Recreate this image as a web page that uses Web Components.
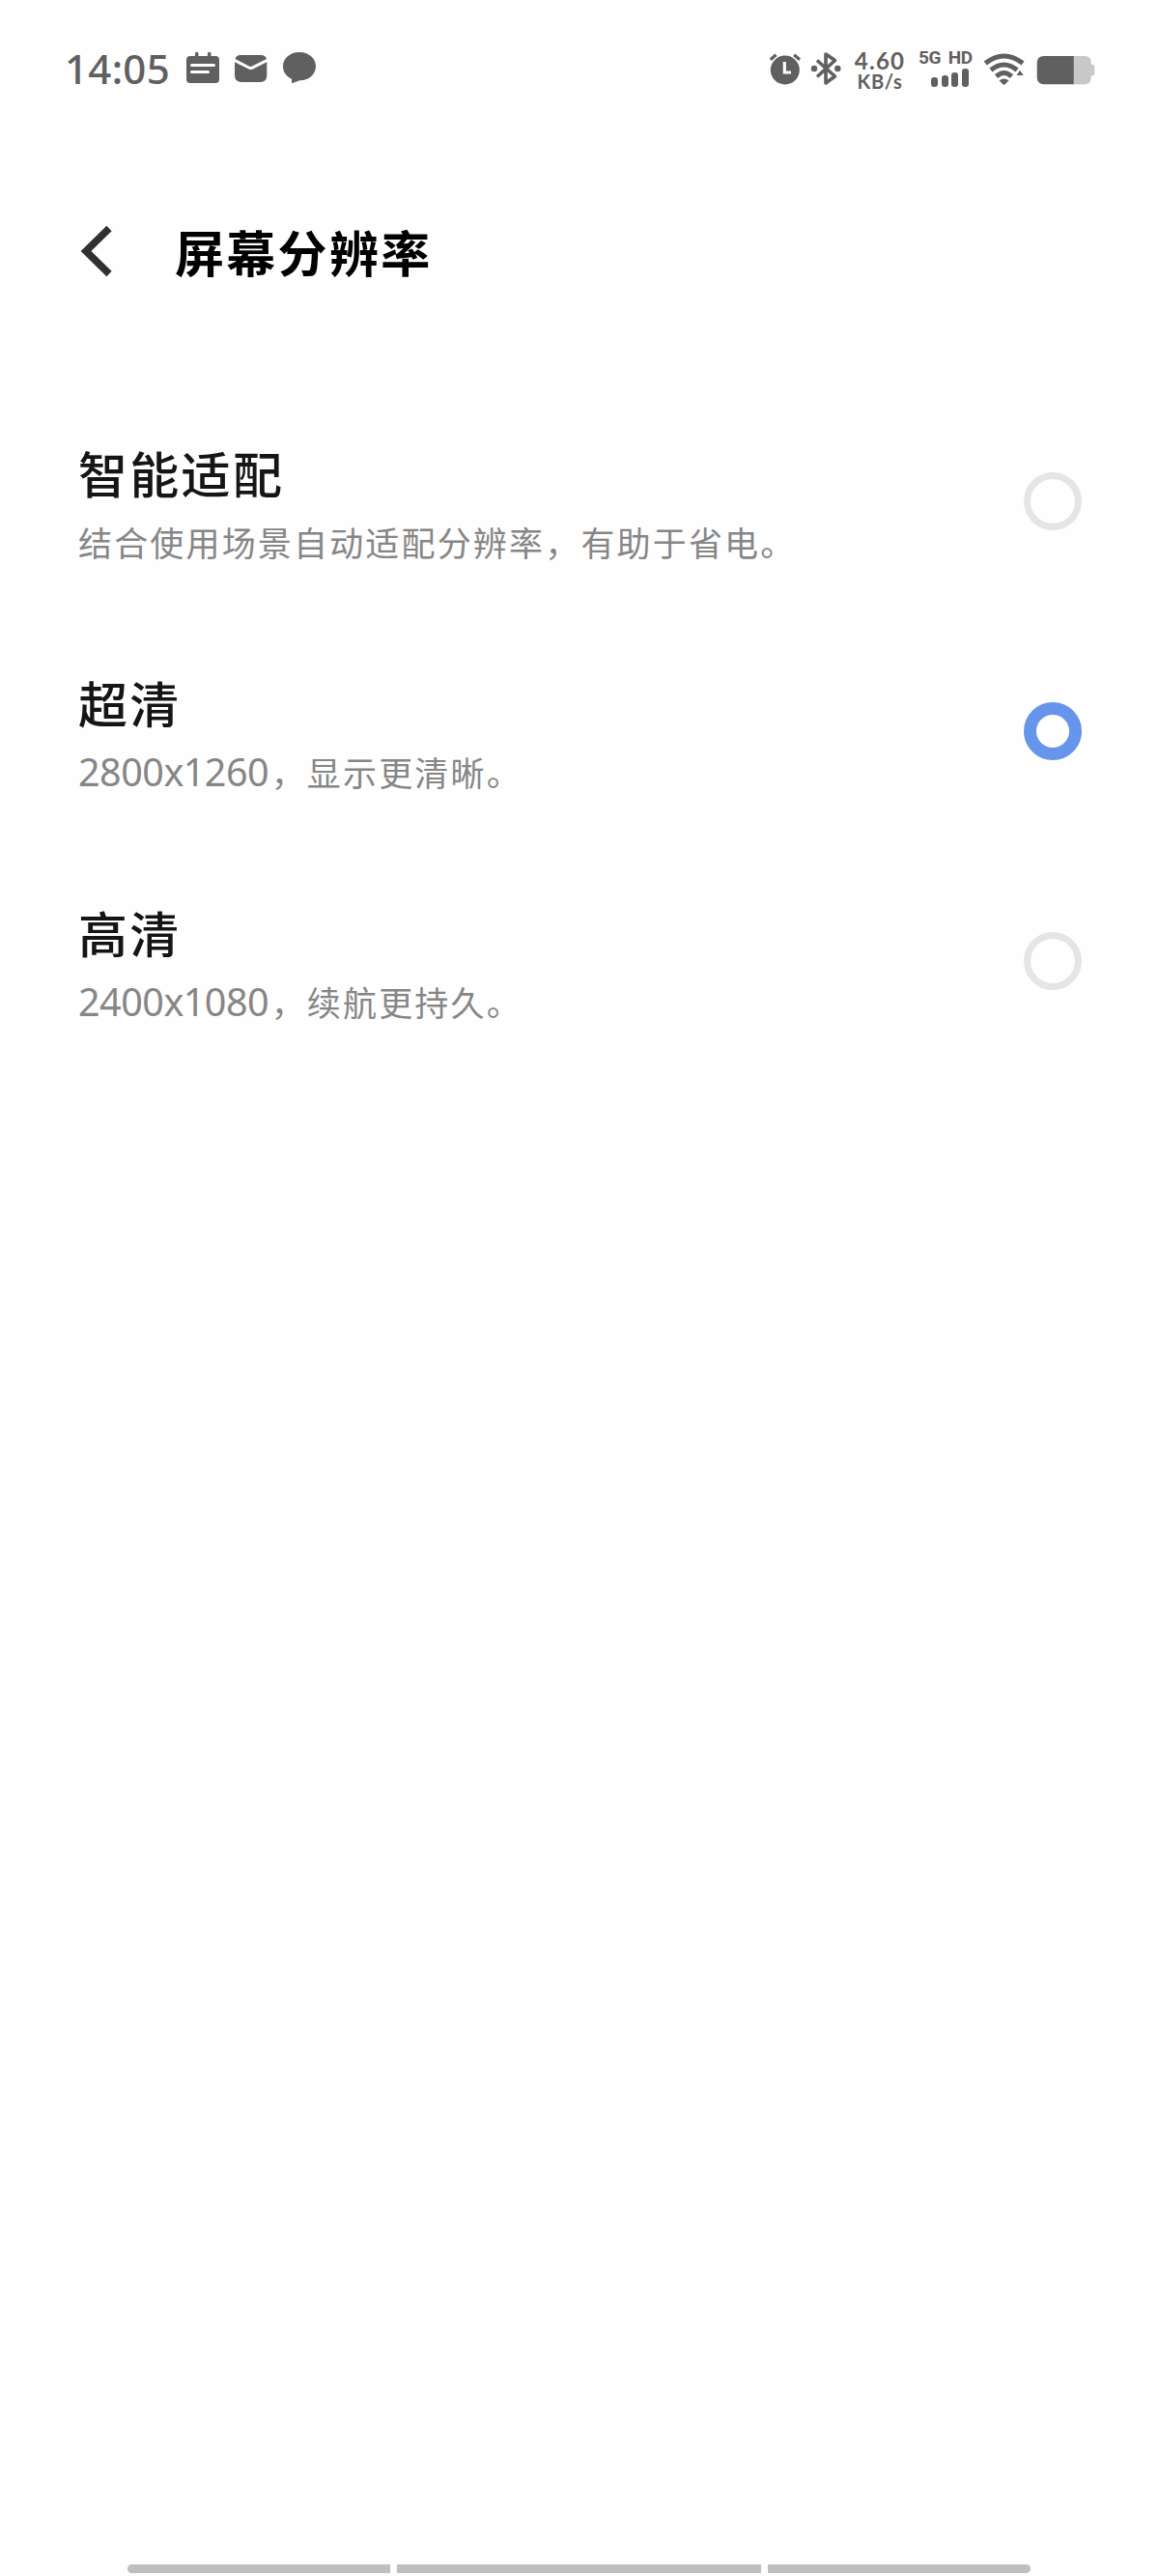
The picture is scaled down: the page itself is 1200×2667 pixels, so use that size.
<!DOCTYPE html>
<html lang="zh-CN">
<head>
<meta charset="utf-8">
<title>屏幕分辨率</title>
<style>
html,body{margin:0;padding:0;background:#fefefe}
body{width:1200px;height:2667px;overflow:hidden;font-family:"Noto Sans CJK SC",sans-serif}
</style>
</head>
<body>
<resolution-page></resolution-page>
<script>
const define=(name,html,setup)=>customElements.define(name,class extends HTMLElement{
  constructor(){super();this.attachShadow({mode:'open'}).innerHTML=html;}
  connectedCallback(){if(setup)setup(this,this.shadowRoot);}
});

define('status-icon',`<style>
:host{display:block;height:40px;flex:none}
svg{display:block;height:40px}
</style>`,(el,root)=>{
  const icons={
    calendar:[193,34,`<path d="M197 58H223Q227 58 227 62V82Q227 86 223 86H197Q193 86 193 82V62Q193 58 197 58Z"/><path d="M203.700 55.500V60M216.700 55.500V60" stroke="#606060" stroke-width="3.600" stroke-linecap="round"/><path d="M198.500 67.500H221.500M198.500 74.500H215.500" stroke="#fefefe" stroke-width="3" stroke-linecap="round"/>`],
    mail:[243,34,`<path d="M249 57H270Q275 57 276 61L260.500 68.700Q259.500 69.200 258.500 68.700L243.500 61Q244.500 57 249 57Z"/><path d="M243 64.200L258 71.700Q259.700 72.500 261.400 71.700L276.300 64.200V78Q276.300 85 269.500 85H250Q243 85 243 78Z"/>`],
    chat:[293,34,`<path d="M310 54C319.500 54 327 60.200 327 68.700C327 77.200 319.500 83.300 310.500 83.300L302 86.300L302 81.700C296.500 79.200 293 74.500 293 68.700C293 60.200 300.500 54 310 54Z"/>`],
    alarm:[796,34,`<circle cx="812.800" cy="72.500" r="15"/><path d="M797.700 61.800L803.500 56.800M828 61.800L822.200 56.800" stroke="#606060" stroke-width="3.200"/><path d="M812.300 64V75H819" stroke="#fefefe" stroke-width="3.200" fill="none"/>`],
    bluetooth:[839,33,`<path d="M846 62.500L864.500 79L855 86V56L864.500 62.500L846 79.500" fill="none" stroke="#606060" stroke-width="3.600" stroke-linejoin="round"/><circle cx="843" cy="71" r="3.200"/><circle cx="867.300" cy="71" r="3.200"/>`],
    wifi:[1018,44,`<g fill="none" stroke="#606060" stroke-width="5"><path d="M1020.200 65.500Q1039.500 50.500 1059 65.500"/><path d="M1026 72.500Q1039.500 61.500 1053 72.500"/><path d="M1031.500 79Q1039.500 72 1047.500 79"/></g><path d="M1034.500 83.300Q1039.500 79.500 1044.500 83.300L1040.700 87.300Q1039.500 88.300 1038.300 87.300Z"/><path d="M1056 72.700L1059.700 78H1052.500Z"/>`],
    battery:[1073,61,`<path d="M1111 58H1122Q1129 58 1129.500 63V66.300Q1133.300 67 1133.300 69V76Q1133.300 78 1129.500 78.700V82Q1129 87.300 1122 87.300H1111Z" fill="#c8c8c8"/><path d="M1081 58H1111.700V87.300H1081Q1073.700 87.300 1073.700 80V65.300Q1073.700 58 1081 58Z"/>`]
  };
  const [x,w,d]=icons[el.getAttribute('name')];
  root.innerHTML+=`<svg width="${w}" viewBox="${x} 51 ${w} 40" fill="#606060">${d}</svg>`;
});

define('signal-meter',`<style>
:host{display:flex;flex-direction:column;width:54px;height:40px;color:#606060;font:700 19px/18px Roboto,sans-serif}
span{white-space:nowrap;letter-spacing:-.3px;word-spacing:3px}
.bars{display:flex;align-items:flex-end;gap:3.700px;margin:2px 0 0 13px;height:19px}
i{width:7px;border-radius:3px;background:#606060}
</style><span>5G HD</span><div class="bars"><i style="height:10px"></i><i style="height:12px"></i><i style="height:15px"></i><i style="height:19px"></i></div>`);

define('network-speed',`<style>
:host{display:flex;flex-direction:column;width:54px;height:40px;color:#606060;font-family:Lato,sans-serif;font-weight:700;text-align:center;white-space:nowrap}
b{font:inherit;font-size:24px;line-height:24px;letter-spacing:1.200px}
small{font-size:20px;line-height:18px;letter-spacing:.7px}
</style><b>4.60</b><small>KB/s</small>`);

define('status-bar',`<style>
:host{display:flex;align-items:flex-start;height:91px;padding:51px 66px 0 67px;box-sizing:border-box}
time{width:126px;margin-right:-16px;font:500 42px/40px "Noto Sans",sans-serif;letter-spacing:.3px;color:#606060}
.left,.right{display:flex}
.left{gap:16px}
.right{margin-left:auto}
</style>
<div class="left"><time>14:05</time><status-icon name="calendar"></status-icon><status-icon name="mail"></status-icon><status-icon name="chat"></status-icon></div>
<div class="right"><status-icon name="alarm"></status-icon><status-icon name="bluetooth" style="margin-left:9px"></status-icon><network-speed style="margin-left:12px"></network-speed><signal-meter style="margin-left:13px"></signal-meter><status-icon name="wifi" style="margin-left:13px"></status-icon><status-icon name="battery" style="margin-left:11px"></status-icon></div>`);

define('page-header',`<style>
:host{display:flex;align-items:center;height:100px;margin-top:119px;padding-left:83px}
svg{display:block}
h1{margin:0 0 0 64px;font-size:51px;line-height:76px;font-weight:700;letter-spacing:2.300px;color:#000}
</style><svg width="34" height="54" viewBox="0 0 34 54"><path d="M30 3.500L6 27L30 50.500" fill="none" stroke="#303030" stroke-width="7.500"/></svg><h1><slot></slot></h1>`);

define('radio-mark',`<style>
:host{display:block;box-sizing:border-box;width:60px;height:60px;border:7px solid #e5e5e5;border-radius:50%;flex:none}
:host([checked]){border:13.300px solid #6795ec;background:#fff}
</style>`);

define('option-row',`<style>
:host{display:flex;align-items:center;height:238.300px;padding:0 80px 0 81px}
.copy{display:flex;flex-direction:column;flex:1}
.title{font-size:51px;line-height:76px;font-weight:500;letter-spacing:2.300px;color:#151515}
.sub{font-size:35px;line-height:52px;height:52px;margin-top:8px;letter-spacing:2.170px;color:#868686;white-space:nowrap}
::slotted(b){display:inline-block;font:400 39.500px/50px "Noto Sans",sans-serif;letter-spacing:-.5px;margin-right:2.500px}
</style><div class="copy"><div class="title"><slot name="title"></slot></div><div class="sub"><slot></slot></div></div><radio-mark></radio-mark>`,(el,root)=>{
  root.querySelector('radio-mark').toggleAttribute('checked',el.hasAttribute('checked'));
});

define('gesture-bar',`<style>
:host{display:flex;gap:6.500px;height:9px;margin:auto 133px 3px 132px}
i{background:#bfbfbf;flex:272}
i:nth-of-type(2){flex:377}
i:first-of-type{border-radius:5px 0 0 5px}
i:last-of-type{border-radius:0 5px 5px 0}
</style><i></i><i></i><i></i>`);

define('resolution-page',`<style>
:host{display:flex;flex-direction:column;width:1200px;height:2667px;background:#fefefe}
main{margin-top:89.500px}
</style>
<status-bar></status-bar>
<page-header>屏幕分辨率</page-header>
<main>
<option-row><span slot="title">智能适配</span>结合使用场景自动适配分辨率，有助于省电。</option-row>
<option-row checked><span slot="title">超清</span><b>2800x1260</b>，显示更清晰。</option-row>
<option-row><span slot="title">高清</span><b>2400x1080</b>，续航更持久。</option-row>
</main>
<gesture-bar></gesture-bar>`);
</script>
</body>
</html>
